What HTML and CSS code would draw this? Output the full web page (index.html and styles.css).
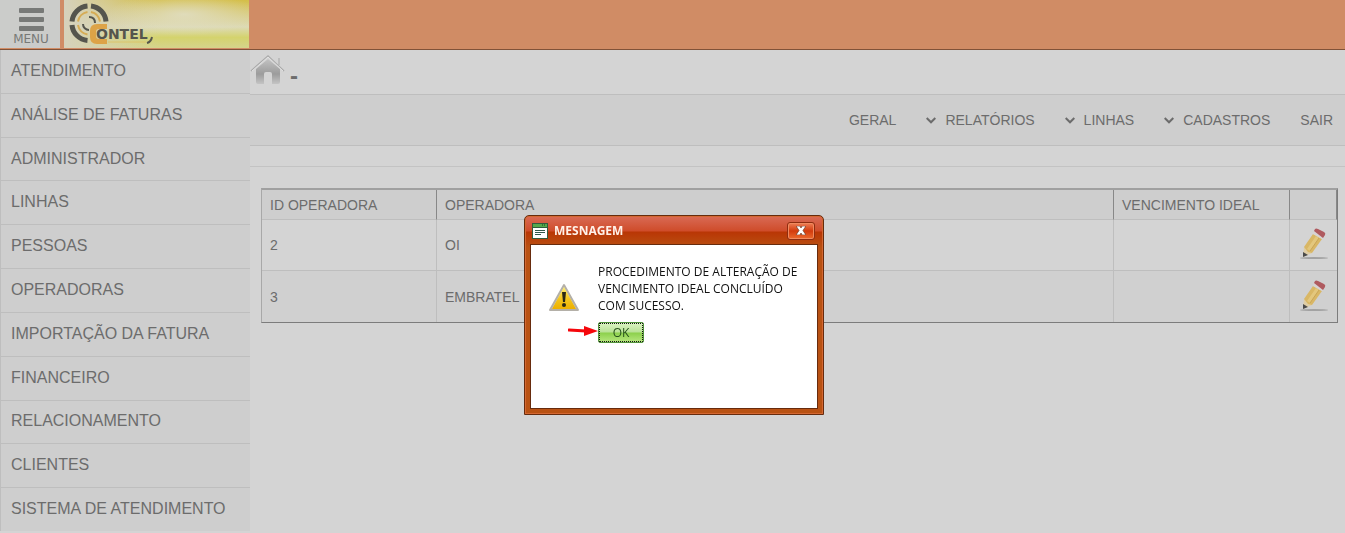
FILE: index.html
```html
<!DOCTYPE html>
<html lang="pt-BR">
<head>
<meta charset="utf-8">
<title>Contel</title>
<link rel="stylesheet" href="styles.css">
</head>
<body>
<header class="topbar">
  <button class="menu-button" type="button">
    <svg class="menu-icon" width="25" height="24" viewBox="0 0 25 24" aria-hidden="true"><g fill="#777977"><rect width="25" height="5" rx="1"/><rect y="9" width="25" height="5" rx="1"/><rect y="18" width="25" height="5" rx="1"/></g></svg>
    <span>MENU</span>
  </button>
  <a class="brand" href="#" aria-label="Contel">
    <svg width="92" height="46" viewBox="0 0 92 46" aria-hidden="true">
      <g fill="none">
        <path d="M23.500 6A17 17 0 0 0 8 21.500M8 25A17 17 0 0 0 23.500 40.500M27 6A17 17 0 0 1 42 21.500" stroke="#55554d" stroke-width="5"/>
        <path d="M23.500 12A11.500 11.500 0 0 0 14 21.500M14 25A11.500 11.500 0 0 0 23.500 34.500M27 12A11.500 11.500 0 0 1 36 21.500" stroke="#d6ac55" stroke-width="2"/>
        <path d="M19 24a6 6 0 0 0 6 6M25 17q6 0 6 6" stroke="#55554d" stroke-width="2"/>
      </g>
      <path d="M43 24H33q-7 0-7 7v6q0 7 7 7h10v-5h-8q-3 0-3-3v-4q0-3 3-3h8z" fill="#dda347"/>
      <path d="M44 42h38" stroke="#dbc46a"/>
      <path d="M88 37q-1 5-5 6" fill="none" stroke="#55554d" stroke-width="2"/>
    </svg>
    <span class="brand-text">ONTEL</span>
  </a>
</header>
<div class="layout">
  <nav class="sidebar" aria-label="Menu principal">
    <a href="#">ATENDIMENTO</a>
    <a href="#">ANÁLISE DE FATURAS</a>
    <a href="#">ADMINISTRADOR</a>
    <a href="#">LINHAS</a>
    <a href="#">PESSOAS</a>
    <a href="#">OPERADORAS</a>
    <a href="#">IMPORTAÇÃO DA FATURA</a>
    <a href="#">FINANCEIRO</a>
    <a href="#">RELACIONAMENTO</a>
    <a href="#">CLIENTES</a>
    <a href="#">SISTEMA DE ATENDIMENTO</a>
  </nav>
  <main class="content">
    <div class="crumbs">
      <a class="home" href="#" aria-label="Início">
        <svg width="36" height="32" viewBox="0 0 36 32" aria-hidden="true">
          <defs><linearGradient id="hg" x2="0" y2="1"><stop stop-color="#c2c2c2"/><stop offset=".6" stop-color="#9c9c9c"/><stop offset="1" stop-color="#c4c4c4"/></linearGradient></defs>
          <path d="M6 15 18 5l12 10v13q0 2-2 2h-6V20q0-2-2-2h-4q-2 0-2 2v10H8q-2 0-2-2z" fill="url(#hg)"/>
          <path d="M1 17 18 2l16 15" fill="none" stroke="#aaa" stroke-width="1.500"/>
          <path d="M2 17 18 3l15 14" fill="none" stroke="#e2e2e2"/>
          <path d="M29 4v7" stroke="#b4b4b4" stroke-width="1.500"/>
        </svg>
      </a>
      <span class="crumb-title">-</span>
    </div>
    <nav class="actions" aria-label="Operadoras">
      <a href="#">GERAL</a>
      <a href="#"><svg width="10" height="7" viewBox="0 0 10 7" aria-hidden="true"><path d="m.7 1 4.300 4.300L9.300 1"/></svg>RELATÓRIOS</a>
      <a href="#"><svg width="10" height="7" viewBox="0 0 10 7" aria-hidden="true"><path d="m.7 1 4.300 4.300L9.300 1"/></svg>LINHAS</a>
      <a href="#"><svg width="10" height="7" viewBox="0 0 10 7" aria-hidden="true"><path d="m.7 1 4.300 4.300L9.300 1"/></svg>CADASTROS</a>
      <a href="#">SAIR</a>
    </nav>
    <div class="strip"></div>
    <div class="table-area">
      <table class="grid">
        <colgroup><col class="col-id"><col><col class="col-due"><col class="col-edit"></colgroup>
        <thead><tr><th>ID OPERADORA</th><th>OPERADORA</th><th>VENCIMENTO IDEAL</th><th></th></tr></thead>
        <tbody>
          <tr><td>2</td><td>OI</td><td></td><td class="edit"><button type="button" aria-label="Editar OI"><svg width="30" height="34" viewBox="0 0 30 34"><use href="#pencil"/></svg></button></td></tr>
          <tr><td>3</td><td>EMBRATEL</td><td></td><td class="edit"><button type="button" aria-label="Editar EMBRATEL"><svg width="30" height="34" viewBox="0 0 30 34"><use href="#pencil"/></svg></button></td></tr>
        </tbody>
      </table>
    </div>
  </main>
</div>
<svg class="symbols" width="0" height="0" aria-hidden="true">
  <symbol id="pencil" viewBox="0 0 30 34">
    <ellipse cx="15" cy="31" rx="14" ry="1" fill="#a2a2a2"/>
    <path d="m5 20-1 10 9-4z" fill="#dfcda4"/>
    <path d="m4 25 0 5 5-2z" fill="#4a4a4a"/>
    <path d="m5 20 9-13 9 5-10 14-4-1z" fill="#d9b765"/>
    <path d="m8 22 9-13 3 2-9 13z" fill="#e3c77d"/>
    <path d="m11 24 9-13" stroke="#c9a556" fill="none"/>
    <path d="m14 7 9 5 2-2-10-6z" fill="#d8d3d3"/>
    <path d="m15 4 1-2q1-1 3 0l6 3q2 1 1 3l-2 3z" fill="#af5a5f"/>
  </symbol>
</svg>
<div class="overlay">
  <section class="dialog" role="dialog" aria-labelledby="dialog-title">
    <div class="dialog-head">
      <svg width="16" height="16" viewBox="0 0 16 16" aria-hidden="true"><path d="M0 0h16v16H0z" fill="#315d3c"/><path d="M1 5h14v10H1z" fill="#fff"/><path d="M1 1h14v3H1z" fill="#55a94c"/><path d="M10 2h1m1 0h1" stroke="#143c1a"/><path d="M3 7.500h10M3 9.500h10M3 11.500h6" stroke="#33594b"/></svg>
      <h1 id="dialog-title">MESNAGEM</h1>
      <button class="close" type="button" aria-label="Fechar"><svg width="10" height="9" viewBox="0 0 10 9" aria-hidden="true"><path d="M0 0h4l1 2 1-2h4L7 4.500 10 9H6L5 7 4 9H0l3-4.500z" fill="#fff" stroke="#69331f" stroke-width=".7"/></svg></button>
    </div>
    <div class="dialog-body">
      <svg class="warning" width="32" height="30" viewBox="0 0 32 30" aria-hidden="true">
        <defs><linearGradient id="wg" x2="0" y2="1"><stop stop-color="#ffef72"/><stop offset=".55" stop-color="#f3c51d"/><stop offset="1" stop-color="#edb000"/></linearGradient></defs>
        <path d="m16 2 14 25H2z" fill="#d7d3ca" stroke="#b4b0a8" stroke-width="2" stroke-linejoin="round"/>
        <path d="m16 4 12 22H4z" fill="url(#wg)"/><path d="M14 9h4l-1 10h-2z" fill="#292716"/><circle cx="16" cy="22" r="2" fill="#292716"/>
      </svg>
      <div class="message">
        <p>PROCEDIMENTO DE ALTERAÇÃO DE VENCIMENTO IDEAL CONCLUÍDO COM SUCESSO.</p>
        <div class="confirm">
          <button class="ok" type="button">OK</button>
          <svg class="arrow" width="30" height="10" viewBox="0 0 30 10" aria-hidden="true"><path d="m1 4 17 1" stroke="#f5070c" stroke-width="3" stroke-linecap="round"/><path d="m16 0 14 5-14 5z" fill="#f5070c"/></svg>
        </div>
      </div>
    </div>
  </section>
</div>
</body>
</html>
```
FILE: styles.css
```css
* { box-sizing: border-box; }
body {
  margin: 0;
  min-height: 100vh;
  background: #d4d4d4;
  color: #6c6c6c;
  font: 14px/20px "Liberation Sans", Arial, sans-serif;
}
a { color: inherit; text-decoration: none; }
button { font: inherit; padding: 0; border: 0; cursor: pointer; }
.topbar {
  display: flex;
  height: 50px;
  gap: 4px;
  background: #d08c65;
  border-bottom: 1px solid #805238;
}
.menu-button {
  width: 60px;
  height: 48px;
  display: flex;
  flex-direction: column;
  align-items: center;
  padding: 8px 0 0 2px;
  background: #cbccca;
  color: #777977;
  font: 12px/14px "DejaVu Sans", sans-serif;
}
.brand {
  width: 185px;
  height: 48px;
  position: relative;
  background: radial-gradient(ellipse at 65% 30%, #e1dfc8cc, transparent 45%), linear-gradient(90deg, #d6d2bc, transparent 52%), linear-gradient(#d4be48, #dddab5 56%, #d4d36d 78%, #d5d48c);
}
.brand-text {
  position: absolute;
  left: 32px;
  top: 25px;
  color: #55554d;
  font: bold 14px/18px "DejaVu Sans", sans-serif;
}
.layout { display: flex; align-items: flex-start; }
.sidebar {
  display: flex;
  flex-direction: column;
  width: 250px;
  min-height: calc(100vh - 52px);
  flex-shrink: 0;
  background: #cecece;
  border-left: 1px solid #bebebe;
}
.sidebar a {
  display: flex;
  flex: 1;
  align-items: center;
  padding: 0 10px 2px;
  border-bottom: 1px solid #bebebe;
  font-size: 16px;
  line-height: 23px;
}
.sidebar a:last-child { border-bottom: 0; }
.content { flex: 1; min-width: 0; }
.crumbs { display: flex; height: 44px; padding-top: 4px; gap: 4px; }
.home { height: 32px; }
.crumb-title { font-size: 24px; font-weight: bold; line-height: 44px; }
.actions {
  display: flex;
  justify-content: flex-end;
  align-items: center;
  gap: 30px;
  height: 52px;
  padding-right: 12px;
  background: #cecece;
  border: solid #bebebe;
  border-width: 1px 0;
}
.actions a { display: flex; align-items: center; gap: 9px; }
.actions path { fill: none; stroke: #6c6c6c; stroke-width: 2; }
.strip { height: 21px; border-bottom: 1px solid #c3c3c3; }
.table-area { padding: 21px 7px 0 11px; }
.grid {
  width: 100%;
  table-layout: fixed;
  border-collapse: separate;
  border-spacing: 0;
  border: 1px solid #7c7c7c;
  border-left-color: #a8a8a8;
  border-top: 2px solid #a0a0a0;
}
.col-id { width: 175px; }
.col-due { width: 176px; }
.col-edit { width: 47px; }
.grid th { height: 30px; padding: 0 8px; background: #cecece; text-align: left; font-weight: normal; border-right: 1px solid #888; border-bottom: 1px solid #bebebe; }
.grid td { height: 51px; padding: 0 8px; border-right: 1px solid #bebebe; border-bottom: 1px solid #bebebe; }
.grid tr:nth-child(2) td { background: #d0d0d0; border-bottom: 0; }
.grid td:last-child { border-right: 0; }
.grid .edit { padding: 0 0 2px; text-align: center; }
.edit button { display: inline-block; height: 34px; background: transparent; vertical-align: middle; }
.edit svg { display: block; }
.symbols { position: absolute; }
.overlay {
  position: fixed;
  inset: 0;
  display: flex;
  align-items: flex-start;
  justify-content: center;
  padding: 215px 0 0 3px;
}
.dialog {
  width: 300px;
  padding: 1px 5px 5px;
  border: 1px solid #672b0d;
  border-radius: 5px 5px 0 0;
  background: linear-gradient(#d96b56, #cf4c2a 15px, #b93605 16px, #b95213 32px, #b95213);
  box-shadow: inset 0 0 0 1px #d46832;
  color: #111;
  font: 12px/17px "Open Sans", sans-serif;
}
.dialog-head { display: flex; align-items: center; height: 27px; padding: 0 3px 0 2px; gap: 6px; }
.dialog h1 { flex: 1; margin: 0; color: #fff1e8; font: bold 12px/18px "Open Sans", sans-serif; }
.close { width: 28px; height: 18px; border: 1px solid #8e2d10; border-radius: 3px; background: linear-gradient(#ee8057, #d33b0d 50%, #ec6b2e); box-shadow: inset 0 0 0 1px #f18a5e; }
.close svg { display: block; margin: auto; }
.dialog-body { display: flex; height: 165px; padding: 18px 16px 18px 17px; gap: 18px; border: 1px solid #672b0d; background: #fff; }
.warning { margin-top: 20px; flex-shrink: 0; }
.message { flex: 1; }
.message p { margin: 0; }
.confirm { position: relative; margin-top: 8px; height: 21px; }
.ok { display: block; width: 46px; height: 21px; border: 1px solid #54953e; border-radius: 2px; outline: 1px dotted #111; outline-offset: -2px; background: linear-gradient(#dcf4c4, #b9e296 48%, #8cd04c 52%, #b7e77f); color: #27521c; line-height: 18px; }
.arrow { position: absolute; right: 100%; top: 4px; }
```
